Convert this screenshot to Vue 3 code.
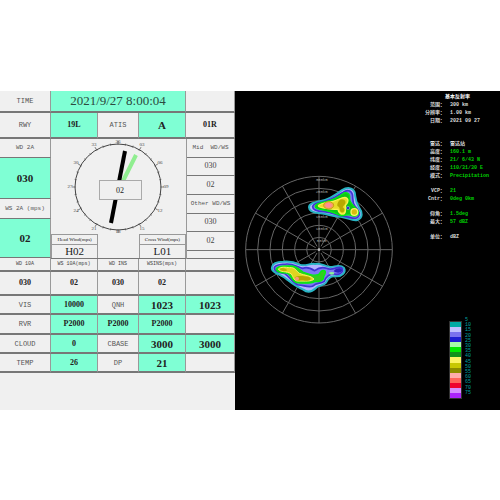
<script setup>
import { computed, ref } from 'vue'

const time = ref('2021/9/27 8:00:04')

const sideWinds = [
  { text: 'Mid  WD/WS', label: true },
  { text: '030' },
  { text: '02' },
  { text: 'Other WD/WS', label: true },
  { text: '030' },
  { text: '02' },
]

// kind: l = label, v = value on green, b = bigger value on green, e = empty
const weatherRows = [
  [['VIS', 'l'], ['10000', 'v'], ['QNH', 'l'], ['1023', 'b'], ['1023', 'b']],
  [['RVR', 'l'], ['P2000', 'v'], ['P2000', 'v'], ['P2000', 'v'], ['', 'e']],
  [['CLOUD', 'l'], ['0', 'v'], ['CBASE', 'l'], ['3000', 'b'], ['3000', 'b']],
  [['TEMP', 'l'], ['26', 'v'], ['DP', 'l'], ['21', 'b'], ['', 'e']],
]

// Point on the compass for a heading in degrees
const polar = (cx, cy, radius, deg) => {
  const rad = (deg * Math.PI) / 180
  return {
    x: Math.round(cx + radius * Math.sin(rad)),
    y: Math.round(cy - radius * Math.cos(rad)),
  }
}

const ticks = Array.from({ length: 36 }, (_, i) => ({ deg: i * 10, major: i % 3 === 0 }))

const headings = computed(() =>
  Array.from({ length: 12 }, (_, i) => ({
    text: String(i === 0 ? 36 : i * 3).padStart(2, '0'),
    ...polar(67, 48, i % 6 ? 48 : 45, i * 30),
  }))
)

const rings = [37, 73, 110, 147, 184, 220]
const rangeLabels = [50, 100, 150, 200, 250, 300]
const spokes = Array.from({ length: 12 }, (_, i) => ({
  from: polar(237, 239, i % 3 ? 12 : 0, i * 30),
  to: polar(237, 239, 220, i * 30),
}))

const infoGroups = [
  [
    ['雷达：', '雷达站'],
    ['高度：', '160.1 m', 'green'],
    ['纬度：', '21/ 6/43 N', 'green'],
    ['经度：', '110/31/30 E', 'green'],
    ['模式：', 'Precipitation', 'green'],
  ],
  [
    ['VCP：', '21', 'green'],
    ['Cntr：', '0deg 0km', 'green'],
  ],
  [
    ['仰角：', '1.5deg', 'green'],
    ['最大：', '57 dBZ', 'green'],
  ],
  [['单位：', 'dBZ']],
]

const scale = [
  '#00aaa4', '#c0c0fe', '#7a72ee', '#1e1ed0', '#a6fca8', '#00ea00', '#10921a', '#fcf464',
  '#c8c802', '#8c8c00', '#feacac', '#fe645c', '#ee0230', '#d48efe', '#aa24fa',
]
</script>

<template>
  <main class="screen">
    <section class="weather">
      <div class="row time-row">
        <div class="cell label">TIME</div>
        <div class="cell on time">{{ time }}</div>
        <div class="cell"></div>
      </div>
      <div class="row runway-row">
        <div class="cell label">RWY</div>
        <div class="cell on value">19L</div>
        <div class="cell label">ATIS</div>
        <div class="cell on value large">A</div>
        <div class="cell value">01R</div>
      </div>

      <div class="wind">
        <div class="wind-left">
          <div class="cell label">WD 2A</div>
          <div class="cell on value large">030</div>
          <div class="cell label">WS 2A (mps)</div>
          <div class="cell on value large">02</div>
        </div>

        <div class="dial">
          <svg class="compass" viewBox="0 0 135 95" aria-label="Wind compass">
            <circle cx="67" cy="48" r="43" fill="none" stroke="#444" />
            <line v-for="t in ticks" :key="t.deg" x1="67" :y1="t.major ? 2 : 4" x2="67" y2="6" :transform="`rotate(${t.deg} 67 48)`" stroke="#555" stroke-width="0.7" />
            <text v-for="h in headings" :key="h.text" :x="h.x" :y="h.y + 1" class="heading">{{ h.text }}</text>
            <path d="M85 16L70 46" stroke="#90ee90" stroke-width="4" />
            <path d="M74 12L60 84" stroke="#000" stroke-width="4" />
            <rect x="48.500" y="41.500" width="42" height="19" fill="#f0f0f0" stroke="#aaa" />
            <text x="69" y="54" class="speed">02</text>
          </svg>
          <div class="components">
            <div class="component">
              <div class="component-name">Head Wind(mps)</div>
              <div class="component-value">H02</div>
            </div>
            <div class="component">
              <div class="component-name">Cross Wind(mps)</div>
              <div class="component-value">L01</div>
            </div>
          </div>
        </div>

        <div class="wind-right">
          <div v-for="(item, i) in sideWinds" :key="i" class="cell" :class="item.label ? 'label' : 'plain'">{{ item.text }}</div>
          <div class="cell"></div>
        </div>
      </div>

      <table class="data-table">
        <colgroup>
          <col class="c1" /><col class="c2" /><col class="c3" /><col class="c2" /><col />
        </colgroup>
        <thead>
          <tr class="names">
            <th>WD 10A</th>
            <th>WS 10A(mps)</th>
            <th>WD INS</th>
            <th>WSINS(mps)</th>
            <td></td>
          </tr>
        </thead>
        <tbody>
          <tr class="readings">
            <td>030</td>
            <td>02</td>
            <td>030</td>
            <td>02</td>
            <td></td>
          </tr>
          <tr v-for="(row, i) in weatherRows" :key="i" class="weather-row">
            <td v-for="(item, j) in row" :key="j" :class="'kind-' + item[1]">{{ item[0] }}</td>
          </tr>
        </tbody>
      </table>
    </section>

    <section class="radar">
      <svg class="scope" viewBox="-15 0 516 480" aria-label="Radar reflectivity">
        <g fill="none" stroke="#666" stroke-width="3">
          <circle v-for="r in rings" :key="r" cx="237" cy="239" :r="r" />
          <line v-for="(s, i) in spokes" :key="i" :x1="s.from.x" :y1="s.from.y" :x2="s.to.x" :y2="s.to.y" />
        </g>
        <circle cx="237" cy="239" r="4" fill="#bbb" />
        <text v-for="(km, i) in rangeLabels" :key="km" x="245" :y="217 - i * 37" class="range">{{ km }}km</text>

        <!-- north east echo -->
        <g stroke-linejoin="round">
          <path d="M207 112C207 101 220 98 240 94C268 89 287 75 306 60C320 52 338 51 344 67C347 82 345 94 357 112C368 127 369 143 352 150C338 154 323 143 303 140C280 140 263 132 241 130C220 129 207 123 207 112Z" fill="#b4b4ff" stroke="#28b4c4" stroke-width="6" />
          <path d="M218 110C219 101 232 98 247 96C274 91 290 79 309 67C322 58 334 61 337 73C340 83 335 96 345 109C358 122 364 136 350 144C337 148 325 139 304 138C291 136 280 128 252 125C232 124 218 120 218 110Z" fill="#7c78f4" stroke="#4034d4" stroke-width="5" />
          <path d="M226 108C229 99 244 98 257 95C277 92 296 80 312 69C325 65 332 76 329 88C330 101 344 109 353 121C360 133 349 142 336 137C321 129 314 139 303 137C289 131 277 124 252 120C235 118 224 115 226 108Z" fill="#10c418" stroke="#00ee10" stroke-width="4" />
          <path d="M236 106C247 97 267 97 279 94C293 91 303 82 315 82C328 85 325 98 317 105C313 113 321 123 313 131C303 136 295 126 294 118C278 119 259 115 246 113C239 112 233 109 236 106Z" fill="#e8dc28" stroke="#f8f450" stroke-width="4" />
          <path d="M292 102C296 89 305 84 314 91C321 100 311 106 308 112C319 119 312 131 302 126C297 116 301 111 292 108Z" fill="#b8a800" />
          <ellipse cx="266" cy="106" rx="15" ry="11" fill="#f4a060" stroke="#c8a010" stroke-width="3" />
          <ellipse cx="266" cy="106" rx="9" ry="7" fill="#ff8c94" />
          <circle cx="343" cy="126" r="10" fill="#d8bc10" stroke="#fcf464" stroke-width="4" />
          <circle cx="324" cy="114" r="5" fill="#3428d8" stroke="#70c8a8" stroke-width="2" />
        </g>

        <!-- south west echo -->
        <g stroke-linejoin="round">
          <path d="M96 291C99 277 113 275 129 275C146 273 163 276 179 284C197 291 208 279 225 282C242 277 252 289 271 291C287 290 301 282 312 294C319 307 305 320 287 319C271 316 264 325 258 338C248 350 237 344 228 354C215 366 203 369 190 359C176 353 157 341 143 330C130 317 118 315 106 308C97 303 94 299 96 291Z" fill="#b4b4ff" stroke="#28b4c4" stroke-width="6" />
          <path d="M103 293C108 281 125 284 140 282C158 281 171 290 189 295C201 289 211 294 224 302C232 296 245 289 260 295C278 304 291 287 304 293C315 303 301 315 287 313C270 307 257 322 253 334C242 342 229 337 219 348C205 355 189 344 174 345C157 337 149 320 133 310C119 308 101 304 103 293Z" fill="#7c78f4" stroke="#4034d4" stroke-width="5" />
          <path d="M281 304C286 294 304 291 307 301C303 310 290 310 281 304Z" fill="#2820bc" />
          <path d="M109 296C115 286 132 288 148 288C166 287 174 295 189 306C203 312 221 319 235 314C243 308 240 302 249 301C261 301 255 313 251 320C252 333 238 335 224 335C209 343 183 339 168 338C154 331 155 317 141 309C125 309 107 306 109 296Z" fill="#34cc20" stroke="#00f010" stroke-width="4" />
          <ellipse cx="275" cy="310" rx="8" ry="4" fill="#8cf098" />
          <path d="M115 297C123 289 137 292 149 293C164 291 168 302 178 310C194 317 212 316 222 327C215 335 192 333 177 333C161 335 160 320 154 312C140 302 120 308 115 297Z" fill="#e0d420" stroke="#fcf464" stroke-width="3" />
          <path d="M119 297C127 291 139 296 142 301C133 306 123 303 119 297Z" fill="#c0ae00" />
          <path d="M164 323C174 314 192 320 206 320C218 326 212 333 194 332C181 330 168 337 164 323Z" fill="#b8a400" />
          <circle cx="171" cy="326" r="6" fill="#f89878" />
        </g>
      </svg>

      <aside class="side">
        <div class="info">
          <h1 class="info-title">基本反射率</h1>
          <dl class="info-group first">
            <dt>范围：</dt><dd>300 km</dd>
            <dt>分辨率：</dt><dd>1.00 km</dd>
            <dt>日期：</dt><dd>2021 09 27</dd>
          </dl>
          <dl v-for="(group, i) in infoGroups" :key="i" class="info-group">
            <template v-for="line in group" :key="line[0]">
              <dt>{{ line[0] }}</dt>
              <dd :class="line[2]">{{ line[1] }}</dd>
            </template>
          </dl>
        </div>
        <div class="legend">
          <div class="legend-bar">
            <span v-for="color in scale" :key="color" :style="{ backgroundColor: color }"></span>
          </div>
          <div class="legend-text">
            <span v-for="(color, i) in scale" :key="color">{{ (i + 1) * 5 }}</span>
          </div>
        </div>
      </aside>
    </section>
  </main>
</template>

<style>
body { background: #fff; }
</style>

<style scoped>
.screen { display: grid; grid-template-columns: 47fr 53fr; box-sizing: border-box; min-height: 100vh; padding: 91px 0 90px; font-family: "Liberation Serif", "Noto Sans CJK SC", serif; }
.screen * { box-sizing: border-box; }

.weather { min-width: 0; background: #f0f0f0; color: #222; }
.row, .wind { display: grid; grid-template-columns: 51fr 47fr 41fr 47fr 49fr; }
.time-row { height: 22px; }
.runway-row { height: 26px; }
.cell { display: flex; align-items: center; justify-content: center; min-width: 0; border-right: 1px solid #999; border-bottom: 1px solid #777; font-size: 8px; line-height: 10px; white-space: pre; }
.row .cell { border-bottom: 2px solid #777; }
.on { background: #7fffd4; }
.label { font-family: "Liberation Mono", monospace; font-size: 7px; color: #555; }
.row .value, .wind .value { font-size: 8px; font-weight: bold; }
.row .large, .wind .large { font-size: 11px; }
.plain { font-size: 8px; color: #444; }
.time { grid-column: span 3; font-size: 13px; color: #2d4a40; }

.wind { height: 119px; }
.wind-left { display: grid; grid-template-rows: 19px 41px 20px 39px; }
.wind-left .label, .wind-right .label { font-size: 6px; }
.wind-right { display: grid; grid-template-rows: repeat(6, 1fr) 8px; border-left: 1px solid #999; }
.dial { grid-column: span 3; display: flex; flex-direction: column; min-width: 0; border-bottom: 1px solid #777; }
.compass { display: block; width: 100%; height: 95px; }
.heading { font-size: 5px; text-anchor: middle; fill: #444; }
.speed { font-size: 8px; text-anchor: middle; fill: #222; }
.components { flex: 1; display: flex; justify-content: space-between; }
.component { width: 35%; border: 1px solid #999; border-bottom: 0; text-align: center; white-space: nowrap; }
.component-name { height: 10px; border-bottom: 1px solid #999; font-size: 5px; line-height: 9px; }
.component-value { font-size: 11px; line-height: 13px; }

.data-table { width: 100%; table-layout: fixed; border-collapse: separate; border-spacing: 0; text-align: center; }
.c1 { width: calc(100% * 51 / 235); }
.c2 { width: 20%; }
.c3 { width: calc(100% * 41 / 235); }
.data-table th, .data-table td { padding: 0; border-right: 1px solid #999; border-bottom: 1px solid #777; line-height: 10px; white-space: nowrap; }
.names th, .names td { height: 14px; border-bottom-width: 2px; font-family: "Liberation Mono", monospace; font-size: 5px; font-weight: normal; color: #444; }
.readings td { height: 24px; border-bottom-width: 2px; font-size: 8px; font-weight: bold; }
.weather-row td { height: 19px; border-bottom-width: 2px; }
.weather-row:nth-child(3) td { height: 20px; }
.data-table .kind-l { font-family: "Liberation Mono", monospace; font-size: 7px; color: #555; }
.data-table .kind-v { background: #7fffd4; font-size: 8px; font-weight: bold; }
.data-table .kind-b { background: #7fffd4; font-size: 11px; font-weight: bold; }

.radar { display: grid; grid-template-columns: 172fr 93fr; min-width: 0; background: #000; color: #ddd; }
.scope { display: block; width: 100%; margin-top: 79px; }
.range { font-family: "Liberation Mono", monospace; font-size: 12px; text-anchor: middle; fill: #aaa; }
.side { display: flex; flex-direction: column; justify-content: space-between; padding: 2px 0 11px; font-family: "Liberation Mono", "Noto Sans CJK SC", monospace; font-size: 5px; line-height: 8px; }
.info-title { margin: 0 0 0 38px; font-size: 5px; line-height: 8px; font-weight: bold; color: #fff; }
.info-group { display: grid; grid-template-columns: 38px 1fr; column-gap: 5px; grid-auto-rows: 8px; margin: 0 0 7px; white-space: pre; }
.info-group.first { margin-bottom: 15px; }
.info-group dt { text-align: right; font-weight: bold; }
.info-group dd { margin: 0; font-weight: bold; }
.info-group .green { color: #00d000; }
.legend { display: flex; gap: 3px; height: 78px; padding-left: 42px; }
.legend-bar, .legend-text { display: flex; flex-direction: column; }
.legend-bar { width: 13px; border: 1px solid #333; }
.legend-bar span { flex: 1; }
.legend-text { margin-top: -3px; margin-bottom: 3px; color: #00a0a0; }
.legend-text span { flex: 1; line-height: 5px; min-height: 0; }
</style>
